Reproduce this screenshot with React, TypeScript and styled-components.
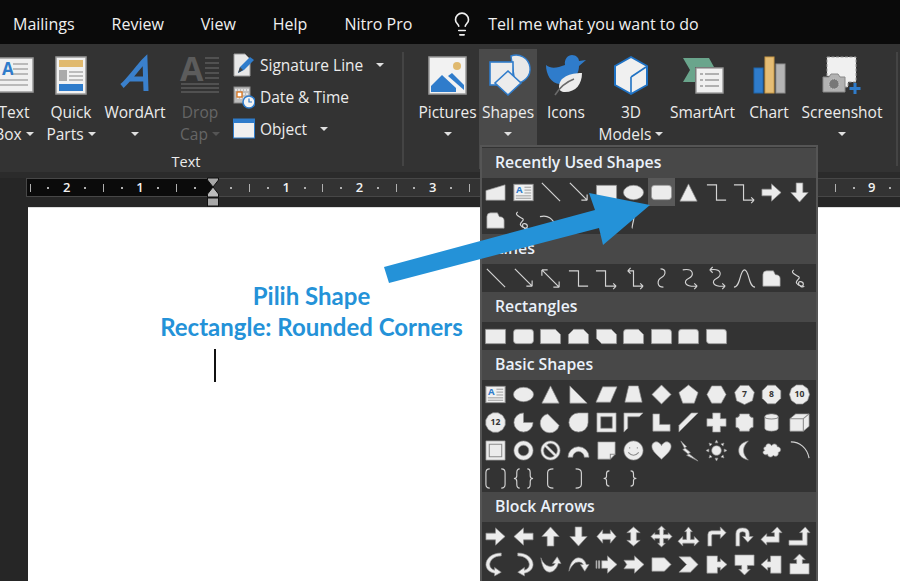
import React from 'react'
import styled, { createGlobalStyle } from 'styled-components'
import { Lightbulb } from 'lucide-react'

const GlobalStyle = createGlobalStyle`
  html, body { margin: 0; padding: 0; background: #262626; }
  body { width: 900px; height: 581px; overflow: hidden; font-family: "Open Sans", "Noto Sans", sans-serif; }
`

/* ---------- shape gallery data ---------- */

type Glyph = { d?: string; line?: boolean; detail?: string; label?: string; textbox?: boolean }

const poly = (n: number, r = 10.5) => {
  let d = ''
  for (let i = 0; i < n; i++) {
    const a = (Math.PI * 2 * (i + 0.5)) / n - Math.PI / 2
    d += (i ? 'L' : 'M') + (12 + r * Math.cos(a)).toFixed(2) + ' ' + (12 + r * Math.sin(a)).toFixed(2)
  }
  return d + 'Z'
}

const l = (d: string): Glyph => ({ d, line: true })
const f = (d: string, detail?: string): Glyph => ({ d, detail })
const n = (sides: number, label: string): Glyph => ({ d: poly(sides), label })

const TEXTBOX: Glyph = { textbox: true }
const LINE = l('M3 2L22 21')
const ARROW = l('M3 2L21 20M21 20h-6M21 20v-6')
const DOUBLE = l('M3 3L21 21M3 3h6M3 3v6M21 21h-6M21 21v-6')
const ELBOW = l('M2 4H12V20H22')
const ELBOW_A = l('M1 4H11V20H22M22 20l-3-3M22 20l-3 3')
const ELBOW_AA = l('M6 4H12V20H22M6 4l3-3M6 4l3 3M22 20l-3-3M22 20l-3 3')
const CURVED = l('M11 2C17 2 17 8 12 11C7 14 7 21 14 21')
const CURVED_A = l('M6 3C18 1 18 9 12 12C6 15 8 21 21 20M21 20l-3-3M21 20l-3 3')
const CURVED_AA = l('M5 3C18 1 18 9 12 12C6 15 8 21 21 20M5 3l3-3M5 3l3 3M21 20l-3-3M21 20l-3 3')
const BELL = l('M1 21C8 21 7 3 12 3S16 21 23 21')
const FREEFORM = f('M3 8Q3 4 7 4H14L16 8Q21 8 21 12V20H3Z')
const SCRIBBLE = l('M6 3C2 6 8 8 11 10S7 14 9 17s7 4 7 1-5-4-5-1 4 5 6 3')
const ARC = l('M3 3C12 3 20 9 22 20')
const RECT = f('M1.5 4.5H22.5V19.5H1.5Z')
const ROUND = f('M5 4.5H19Q22.5 4.5 22.5 8V16Q22.5 19.5 19 19.5H5Q1.5 19.5 1.5 16V8Q1.5 4.5 5 4.5Z')
const OVAL = f('M1.5 12a10.5 7.5 0 1 0 21 0a10.5 7.5 0 1 0-21 0Z')
const TRI = f('M12 3L21 21H3Z')
const RIGHT = f('M2 8.5H12V3L22 12L12 21V15.5H2Z')
const LEFT = f('M22 8.5H12V3L2 12L12 21V15.5H22Z')
const UP = f('M8.5 22V12H3L12 2L21 12H15.5V22Z')
const DOWN = f('M8.5 2V12H3L12 22L21 12H15.5V2Z')

const SECTIONS: { title: string; active?: number; glyphs: Glyph[] }[] = [
  {
    title: 'Recently Used Shapes',
    active: 6,
    glyphs: [
      f('M2 10L22 4V20H2Z'), TEXTBOX, LINE, ARROW, RECT, OVAL, ROUND, TRI, ELBOW, ELBOW_A, RIGHT, DOWN,
      FREEFORM, SCRIBBLE, l('M1 8C9 6 14 9 19 20'), l('M3 20C4 6 14 4 22 12'), {}, l('M9 4Q14 4 12 12T11 20'),
    ],
  },
  {
    title: 'Lines',
    glyphs: [LINE, ARROW, DOUBLE, ELBOW, ELBOW_A, ELBOW_AA, CURVED, CURVED_A, CURVED_AA, BELL, FREEFORM, SCRIBBLE],
  },
  {
    title: 'Rectangles',
    glyphs: [
      RECT, ROUND,
      f('M1.5 4.5H17L22.5 10V19.5H1.5Z'),
      f('M7 4.5H17L22.5 10V19.5H1.5V10Z'),
      f('M1.5 4.5H17L22.5 10V19.5H7L1.5 14Z'),
      f('M5 4.5H17L22.5 10V19.5H1.5V8Q1.5 4.5 5 4.5Z'),
      f('M1.5 4.5H19Q22.5 4.5 22.5 8V19.5H1.5Z'),
      f('M5 4.5H19Q22.5 4.5 22.5 8V19.5H1.5V8Q1.5 4.5 5 4.5Z'),
      f('M1.5 4.5H19Q22.5 4.5 22.5 8V19.5H5Q1.5 19.5 1.5 16Z'),
    ],
  },
  {
    title: 'Basic Shapes',
    glyphs: [
      TEXTBOX, OVAL, TRI, f('M3 3L21 21H3Z'), f('M8 4H23L16 20H1Z'), f('M7 3H17L21 20H3Z'),
      f('M12 2L22 12L12 22L2 12Z'), f('M12 2L22 10L18 21H6L2 10Z'), f('M7 3H17L22 12L17 21H7L2 12Z'),
      n(7, '7'), n(8, '8'), n(10, '10'),

      n(12, '12'), f('M12 12V2A10 10 0 1 0 22 12Z'), f('M9 3A10 10 0 1 0 21 15Z'), f('M22 2V12A10 10 0 1 1 12 2Z'),
      f('M2 2H22V22H2ZM6 6V18H18V6Z'), f('M2 2H22L18 6H6V18L2 22Z'), f('M3 3H10V14H21V21H3Z'), f('M15 2H22L2 22V15Z'),
      f('M8 2H16V8H22V16H16V22H8V16H2V8H8Z'), f('M7 3H17Q17 7 21 7V17Q17 17 17 21H7Q7 17 3 17V7Q7 7 7 3Z'),
      f('M5 6C5 2 19 2 19 6V18C19 22 5 22 5 18Z', 'M5 6C5 9 19 9 19 6'),
      f('M2 8L8 3H22V16L16 21H2Z', 'M2 8H16V21M16 8L22 3'),

      f('M2 2H22V22H2Z', 'M5.5 5.5H18.5V18.5H5.5Z'),
      f('M12 2a10 10 0 1 0 .01 0ZM12 6.5a5.5 5.5 0 1 1-.01 0Z'),
      f('M12 2a10 10 0 1 0 .01 0ZM8 6.2A7 7 0 0 1 17.8 16ZM6.2 8A7 7 0 0 0 16 17.8Z'),
      f('M1 19A11 11 0 0 1 23 19H18A6 6 0 0 0 6 19Z'),
      f('M3 3H21V16L16 21H3Z', 'M21 16H16V21'),
      f('M12 2a10 10 0 1 0 .01 0Z', 'M8 8.5v1.5M16 8.5v1.5M6.5 14Q12 20 17.5 14'),
      f('M12 21C4 14 2 11 2 7.5C2 4 6 2 8.5 3.5C10 4.3 11.5 5.5 12 7C12.5 5.5 14 4.3 15.5 3.5C18 2 22 4 22 7.5C22 11 20 14 12 21Z'),
      f('M4 2L10 8L8 9L14 14L12 15L22 23L10 17L12 16L6 11L8 10Z'),
      f('M12 7a5 5 0 1 0 .01 0ZM12 1l1.5 3h-3ZM12 23l-1.5-3h3ZM1 12l3-1.5v3ZM23 12l-3 1.5v-3ZM4.2 4.2l3.2 1-2.2 2.2ZM19.8 4.2l-1 3.2-2.2-2.2ZM4.2 19.8l1-3.2 2.2 2.2ZM19.8 19.8l-3.2-1 2.2-2.2Z'),
      f('M16 2C8 4 6 8 6 12S8 20 16 22C12 18 11 15 11 12S12 6 16 2Z'),
      f('M6 8C6 4 11 4 12 7C14 4 18 5 18 8C22 8 23 13 19 14C20 18 15 19 14 17C12 20 8 19 8 16C4 18 1 13 5 12C3 10 4 8 6 8Z'),
      ARC,

      l('M6 2Q2 2 2 6V18Q2 22 6 22M18 2Q22 2 22 6V18Q22 22 18 22'),
      l('M8 2Q5 2 5 6V9Q5 12 2 12Q5 12 5 15V18Q5 22 8 22M16 2Q19 2 19 6V9Q19 12 22 12Q19 12 19 15V18Q19 22 16 22'),
      l('M15 2Q9 2 9 6V18Q9 22 15 22'),
      l('M9 2Q15 2 15 6V18Q15 22 9 22'),
      l('M15 4Q12 4 12 7V10Q12 12 9 12Q12 12 12 14V17Q12 20 15 20'),
      l('M9 4Q12 4 12 7V10Q12 12 15 12Q12 12 12 14V17Q12 20 9 20'),
    ],
  },
  {
    title: 'Block Arrows',
    glyphs: [
      RIGHT, LEFT, UP, DOWN,
      f('M2 12L8 5V9H16V5L22 12L16 19V15H8V19Z'),
      f('M12 2L19 8H15V16H19L12 22L5 16H9V8H5Z'),
      f('M12 1L16 5H14V10H19V8L23 12L19 16V14H14V19H16L12 23L8 19H10V14H5V16L1 12L5 8V10H10V5H8Z'),
      f('M12 2L16 7H14V15H18V12L23 17L18 22V19H6V22L1 17L6 12V15H10V7H8Z'),
      f('M3 22V10Q3 6 7 6H16V2L22 8L16 14V10H8Q7 10 7 11V22Z'),
      f('M3 22V9Q3 3 10 3T17 9V12H21L15.5 18L10 12H13V9Q13 7 10 7T7 9V22Z'),
      f('M18 2L23 8H20V18H7V21L1 15L7 9V12H15V8H12Z'),
      f('M1 16H15V8H12L18 2L23 8H20V21H1Z'),

      f('M18 3C10 3 6 8 6 12C6 15 8 17 11 18V15L18 20L11 24V21C5 20 2 16 2 12C2 6 8 0 18 0Z'),
      f('M6 3C14 3 18 8 18 12C18 15 16 17 13 18V15L6 20L13 24V21C19 20 22 16 22 12C22 6 16 0 6 0Z'),
      f('M2 5C4 11 8 14 12 14C14 14 16 13 17 11H14L19 4L23 11H20C19 16 15 20 11 20C6 20 3 14 2 5Z'),
      f('M2 19C3 11 7 5 12 5C16 5 19 8 20 12H23L18.5 19L14 12H17C16 10 14 9.5 12 9.5C8 9.5 5 13 2 19Z'),
      f('M1 8H2V16H1ZM3.5 8H5V16H3.5ZM7 8H13V3L23 12L13 21V16H7Z'),
      f('M2 7.5H13V3L23 12L13 21V16.5H2L5 12Z'),
      f('M2 5H15L22 12L15 19H2Z'),
      f('M2 4H14L22 12L14 20H2L10 12Z'),
      f('M2 3H13V9H16V6L23 12L16 18V15H13V21H2Z'),
      f('M2 2H22V13H15V17H18L12 23L6 17H9V13H2Z'),
      f('M11 3H22V21H11V15H8V18L1 12L8 6V9H11Z'),
      f('M2 22V11H9V7H6L12 1L18 7H15V11H22V22Z'),
    ],
  },
]

/* ---------- page ---------- */

export default function App() {
  return (
    <>
      <GlobalStyle />
      <Window>
        <TitleBar>
          <Tab>Mailings</Tab>
          <Tab>Review</Tab>
          <Tab>View</Tab>
          <Tab>Help</Tab>
          <Tab>Nitro Pro</Tab>
          <TellMe>
            <Lightbulb size={26} strokeWidth={1.5} />
            <span>Tell me what you want to do</span>
          </TellMe>
        </TitleBar>

        <Ribbon>
          <Group $width={432} $offset={-30}>
            <GroupItems>
              <RibbonButton $width={56} $first>
                <IconSlot><TextBoxIcon /></IconSlot>
                <BtnLine>Text</BtnLine>
                <BtnLine>Box<Caret $inline /></BtnLine>
              </RibbonButton>
              <RibbonButton $width={58}>
                <IconSlot><QuickPartsIcon /></IconSlot>
                <BtnLine>Quick</BtnLine>
                <BtnLine>Parts<Caret $inline /></BtnLine>
              </RibbonButton>
              <RibbonButton $width={70}>
                <IconSlot><WordArtIcon /></IconSlot>
                <BtnLine>WordArt</BtnLine>
                <BtnLine><Caret /></BtnLine>
              </RibbonButton>
              <RibbonButton $width={60} $disabled>
                <IconSlot><DropCapIcon /></IconSlot>
                <BtnLine>Drop</BtnLine>
                <BtnLine>Cap<Caret $inline $disabled /></BtnLine>
              </RibbonButton>
              <SmallStack>
                <SmallRow><SignatureIcon /><span>Signature Line</span><Caret $gap={8} /></SmallRow>
                <SmallRow><DateTimeIcon /><span>Date &amp; Time</span></SmallRow>
                <SmallRow><ObjectIcon /><span>Object</span><Caret $gap={8} /></SmallRow>
              </SmallStack>
            </GroupItems>
            <GroupLabel>Text</GroupLabel>
          </Group>
          <GroupSep />
          <Group $width={492} $offset={0}>
            <GroupItems>
              <RibbonButton $width={63} $pad={12}>
                <IconSlot><PicturesIcon /></IconSlot>
                <BtnLine>Pictures</BtnLine>
                <BtnLine><Caret /></BtnLine>
              </RibbonButton>
              <RibbonButton $width={58} $active>
                <IconSlot><ShapesIcon /></IconSlot>
                <BtnLine>Shapes</BtnLine>
                <BtnLine><Caret /></BtnLine>
              </RibbonButton>
              <RibbonButton $width={58}>
                <IconSlot><IconsIcon /></IconSlot>
                <BtnLine>Icons</BtnLine>
              </RibbonButton>
              <RibbonButton $width={72}>
                <IconSlot><CubeIcon /></IconSlot>
                <BtnLine>3D</BtnLine>
                <BtnLine>Models<Caret $inline /></BtnLine>
              </RibbonButton>
              <RibbonButton $width={71}>
                <IconSlot><SmartArtIcon /></IconSlot>
                <BtnLine>SmartArt</BtnLine>
              </RibbonButton>
              <RibbonButton $width={62}>
                <IconSlot><ChartIcon /></IconSlot>
                <BtnLine>Chart</BtnLine>
              </RibbonButton>
              <RibbonButton $width={84}>
                <IconSlot><ScreenshotIcon /></IconSlot>
                <BtnLine>Screenshot</BtnLine>
                <BtnLine><Caret /></BtnLine>
              </RibbonButton>
            </GroupItems>
          </Group>
          <GroupSep />
        </Ribbon>

        <RulerBand>
          <Ruler>
            {Array.from({ length: 49 }, (_, i) => {
              const k = i - 10
              const mod = ((k % 4) + 4) % 4
              return (
                <RulerCell key={i}>
                  {mod === 0 && k !== 0 ? <RulerNum>{Math.abs(k / 4)}</RulerNum> : null}
                  {mod === 1 || mod === 3 ? <RulerDot /> : null}
                  {mod === 2 ? <RulerTick /> : null}
                </RulerCell>
              )
            })}
            <IndentMarker viewBox="0 0 12 30">
              <path d="M0.5 1H11.5V3L6 10L0.5 3Z" fill="#a8a8a8" stroke="#111" />
              <path d="M6 10L11.5 17V20H0.5V17Z" fill="#bdbdbd" stroke="#111" />
              <rect x="0.5" y="21" width="11" height="8" fill="#a8a8a8" stroke="#111" />
            </IndentMarker>
          </Ruler>
        </RulerBand>

        <DocArea>
          <Page>
            <Annotation>
              Pilih Shape
              <br />
              Rectangle: Rounded Corners
            </Annotation>
            <TextCursor />
          </Page>
        </DocArea>

        <Gallery>
          {SECTIONS.map(s => (
            <section key={s.title}>
              <SectionHead>{s.title}</SectionHead>
              <ShapeGrid>
                {s.glyphs.map((g, i) => (
                  <ShapeCell key={i} $active={s.active === i}>
                    <ShapeIcon glyph={g} />
                  </ShapeCell>
                ))}
              </ShapeGrid>
            </section>
          ))}
        </Gallery>

        <CalloutArrow viewBox="0 0 280 100">
          <path d="M4 77L215 20L209 3L270 15L223 55L219 38L9 93Z" fill="#2492d8" />
        </CalloutArrow>
      </Window>
    </>
  )
}

function ShapeIcon({ glyph }: { glyph: Glyph }) {
  if (glyph.textbox) {
    return (
      <ShapeSvg viewBox="0 0 24 24">
        <rect x="2" y="3.5" width="20" height="17" fill="#f0f0f0" stroke="#999" />
        <GlyphLetter x="7.5" y="12.5">A</GlyphLetter>
        <path d="M13 6.5h7M13 9.5h7M13 12.5h7M4 15.5h16M4 18h16" stroke="#999" strokeWidth="1" />
      </ShapeSvg>
    )
  }
  if (!glyph.d) return null
  return (
    <ShapeSvg viewBox="0 0 24 24">
      {glyph.line ? <LinePath d={glyph.d} /> : <FillPath d={glyph.d} fillRule="evenodd" />}
      {glyph.detail ? <DetailPath d={glyph.detail} /> : null}
      {glyph.label ? <GlyphNumber x="12" y="15">{glyph.label}</GlyphNumber> : null}
    </ShapeSvg>
  )
}

/* ---------- ribbon icons ---------- */

function TextBoxIcon() {
  return (
    <RibbonSvg $w={40} $h={36} $shift={-1} viewBox="0 0 40 36">
      <rect x="1" y="1" width="38" height="34" fill="#f0f0f0" stroke="#9a9a9a" strokeWidth="1.5" />
      <BlueLetter x="8" y="18">A</BlueLetter>
      <path d="M19 7h15M19 12h15M19 17h15M5 23h29M5 28h29" stroke="#a8a8a8" strokeWidth="1.6" />
    </RibbonSvg>
  )
}

function QuickPartsIcon() {
  return (
    <RibbonSvg $w={32} $h={39} viewBox="0 0 32 39">
      <rect x="1" y="1" width="30" height="37" fill="#f2f2f2" stroke="#9a9a9a" strokeWidth="1.5" />
      <rect x="4" y="4" width="24" height="7" fill="#e0b96e" />
      <rect x="4" y="14" width="8" height="11" fill="#aaa" />
      <path d="M14 16h14M14 20h14M14 24h14" stroke="#aaa" strokeWidth="1.4" />
      <rect x="4" y="28" width="24" height="7" fill="#2f7ccb" />
    </RibbonSvg>
  )
}

function WordArtIcon() {
  return (
    <RibbonSvg $w={30} $h={37} viewBox="0 0 30 37">
      <path d="M2 29C10 22 18 10 25 3L26 34M8 22H25" fill="none" stroke="#3a80cc" strokeWidth="5" />
    </RibbonSvg>
  )
}

function DropCapIcon() {
  return (
    <RibbonSvg $w={40} $h={41} viewBox="0 0 40 41">
      <GreyLetter x="0" y="26">A</GreyLetter>
      <path d="M25 3h14M25 8h14M25 13h14M25 18h14M25 23h14M1 29h38M1 33h38M1 37h38" stroke="#5c5c5c" strokeWidth="1.6" />
    </RibbonSvg>
  )
}

function SignatureIcon() {
  return (
    <SmallSvg viewBox="0 0 22 24">
      <path d="M1 1H12L17 6V23H1Z" fill="#e8e8e8" stroke="#999" />
      <path d="M5 20L7 14L17 4L21 7L11 17Z" fill="#2f7ccb" />
      <path d="M5 20L7 14L10 17Z" fill="#444" />
    </SmallSvg>
  )
}

function DateTimeIcon() {
  return (
    <SmallSvg viewBox="0 0 22 24">
      <rect x="1" y="2" width="16" height="16" fill="#bdbdbd" stroke="#888" />
      <path d="M2 5h14M4 9h3M10 9h5M4 13h12" stroke="#eee" strokeWidth="1.5" strokeDasharray="2 1" />
      <rect x="4" y="7" width="5" height="5" fill="#fff" stroke="#d9731b" strokeWidth="1.3" />
      <circle cx="16" cy="17" r="6" fill="#f4f4f4" stroke="#2f7ccb" strokeWidth="1.6" />
      <path d="M16 13.5V17H19" stroke="#2f7ccb" strokeWidth="1.2" fill="none" />
    </SmallSvg>
  )
}

function ObjectIcon() {
  return (
    <SmallSvg viewBox="0 0 22 24">
      <rect x="0.5" y="2" width="21" height="19" fill="#f0f0f0" stroke="#2f7ccb" />
      <rect x="0.5" y="2" width="21" height="4" fill="#2f7ccb" />
    </SmallSvg>
  )
}

function PicturesIcon() {
  return (
    <RibbonSvg $w={39} $h={39} viewBox="0 0 39 39">
      <rect x="1" y="1" width="37" height="37" fill="#f2f2f2" stroke="#9a9a9a" strokeWidth="1.5" />
      <circle cx="29" cy="10" r="4" fill="#e0b96e" />
      <path d="M3 36V30L14 19L28 32V36Z" fill="#2f7ccb" />
      <path d="M20 20L24 17L36 29V34Z" fill="#2f7ccb" />
    </RibbonSvg>
  )
}

function ShapesIcon() {
  return (
    <RibbonSvg $w={42} $h={42} viewBox="0 0 42 42">
      <path d="M24 2A14 14 0 1 1 28 29Z" fill="#e8e8e8" stroke="#2f7ccb" strokeWidth="1.4" />
      <rect x="3" y="8" width="23" height="23" fill="#ececec" stroke="#2f7ccb" strokeWidth="1.6" />
      <path d="M21 17L34 29L21 41L8 29Z" fill="#ececec" stroke="#2f7ccb" strokeWidth="1.6" />
    </RibbonSvg>
  )
}

function IconsIcon() {
  return (
    <RibbonSvg $w={42} $h={42} viewBox="0 0 42 42">
      <path d="M1 11C6 15 12 14 20 11C19 5 23 1 27 1C31 1 34 4 34 7L41 6L34 12C34 20 28 30 15 30C6 30 1 20 1 11Z" fill="#2f7ccb" />
      <path d="M37 19C25 19 14 23 14 33C14 36 16 38 20 38C31 38 37 30 37 19Z" fill="#ececec" />
      <path d="M10 41C15 33 21 28 29 25" fill="none" stroke="#6a6a6a" strokeWidth="1.6" />
    </RibbonSvg>
  )
}

function CubeIcon() {
  return (
    <RibbonSvg $w={36} $h={41} viewBox="0 0 36 41">
      <path d="M18 2L34 11V30L18 39L2 30V11Z" fill="#f0f0f0" stroke="#1f72c4" strokeWidth="2" strokeLinejoin="round" />
      <path d="M18 22V39M18 22L33 12" fill="none" stroke="#1f72c4" strokeWidth="1.6" />
    </RibbonSvg>
  )
}

function SmartArtIcon() {
  return (
    <RibbonSvg $w={42} $h={37} viewBox="0 0 42 37">
      <path d="M1 1H27L32 10H13V25H1L8 13Z" fill="#6aa58c" />
      <rect x="14" y="11" width="27" height="25" fill="#f0f0f0" stroke="#9a9a9a" strokeWidth="1.4" />
      <path d="M18 17h3M23 17h14M18 23h3M23 23h14M18 29h3M23 29h14" stroke="#9a9a9a" strokeWidth="1.5" />
    </RibbonSvg>
  )
}

function ChartIcon() {
  return (
    <RibbonSvg $w={33} $h={38} viewBox="0 0 33 38">
      <rect x="1" y="12" width="9" height="25" fill="#2f7ccb" stroke="#1f66ad" />
      <rect x="12" y="1" width="9" height="36" fill="#e5bd75" stroke="#c99a48" />
      <rect x="23" y="8" width="9" height="29" fill="#b4b4b4" stroke="#8f8f8f" />
    </RibbonSvg>
  )
}

function ScreenshotIcon() {
  return (
    <RibbonSvg $w={41} $h={39} viewBox="0 0 41 39">
      <path d="M5 1H34V26H26V31H12V20H5Z" fill="#f0f0f0" stroke="#999" strokeDasharray="3 1.5" />
      <path d="M1 21H7L9 18H16L18 21H23V36H1Z" fill="#b2b2b2" stroke="#888" />
      <circle cx="12" cy="28" r="5" fill="#777" stroke="#ccc" strokeDasharray="1.4 1" />
      <path d="M33 27V38M27.5 32.5H38.5" stroke="#2f7ccb" strokeWidth="3" />
    </RibbonSvg>
  )
}

/* ---------- styles ---------- */

const Window = styled.div`
  position: relative;
  width: 900px;
  height: 581px;
  overflow: hidden;
  display: flex;
  flex-direction: column;
  background: #262626;
`

const TitleBar = styled.header`
  height: 44px;
  flex: none;
  box-sizing: border-box;
  display: flex;
  align-items: center;
  padding: 3px 0 0 13px;
  gap: 37px;
  background: #0a0a0a;
  color: #f0f0f0;
  font-size: 16px;
`

const Tab = styled.span`
  white-space: nowrap;
`

const TellMe = styled.div`
  display: flex;
  align-items: center;
  gap: 13px;
  svg {
    flex: none;
  }
  span {
    white-space: nowrap;
  }
`

const Ribbon = styled.div`
  height: 128px;
  flex: none;
  display: flex;
  background: #333;
  color: #ececec;
  font-size: 15.5px;
  overflow: hidden;
`

const Group = styled.div<{ $width: number; $offset: number }>`
  flex: none;
  width: ${p => p.$width}px;
  margin-left: ${p => p.$offset}px;
  display: flex;
  flex-direction: column;
  padding-top: 5px;
`

const GroupItems = styled.div`
  display: flex;
  height: 101px;
`

const GroupLabel = styled.div`
  text-align: center;
  line-height: 20px;
  margin-top: 6px;
  font-size: 14.5px;
`

const GroupSep = styled.div`
  flex: none;
  width: 2px;
  margin: 8px 0 6px;
  background: #444;
`

const RibbonButton = styled.div<{ $width: number; $first?: boolean; $disabled?: boolean; $active?: boolean; $pad?: number }>`
  flex: none;
  width: ${p => p.$width}px;
  margin-left: ${p => (p.$first ? 16 : p.$pad ?? 0)}px;
  display: flex;
  flex-direction: column;
  align-items: center;
  color: ${p => (p.$disabled ? '#666' : 'inherit')};
  background: ${p => (p.$active ? '#4a4a4a' : 'transparent')};
  height: ${p => (p.$active ? '120px' : 'auto')};
`

const IconSlot = styled.div`
  height: 52px;
  display: flex;
  align-items: center;
  justify-content: center;
`

const BtnLine = styled.div`
  height: 22px;
  line-height: 22px;
  white-space: nowrap;
  display: flex;
  align-items: center;
  justify-content: center;
`

const Caret = styled.i<{ $inline?: boolean; $gap?: number; $disabled?: boolean }>`
  display: inline-block;
  width: 0;
  height: 0;
  margin-left: ${p => (p.$gap ? `${p.$gap}px` : p.$inline ? '4px' : '0')};
  border-style: solid;
  border-width: 4px 4px 0;
  border-color: ${p => (p.$disabled ? '#555' : '#e0e0e0')} transparent transparent;
`

const SmallStack = styled.div`
  margin-left: 3px;
  display: flex;
  flex-direction: column;
`

const SmallRow = styled.div`
  height: 32px;
  display: flex;
  align-items: center;
  gap: 5px;
  white-space: nowrap;
`

const SmallSvg = styled.svg`
  width: 22px;
  height: 24px;
  flex: none;
`

const RibbonSvg = styled.svg<{ $w: number; $h: number; $shift?: number }>`
  width: ${p => p.$w}px;
  height: ${p => p.$h}px;
  margin-left: ${p => p.$shift ?? 0}px;
  flex: none;
  overflow: visible;
`

const BlueLetter = styled.text`
  font: 700 17px "Open Sans", sans-serif;
  fill: #2f7ccb;
`

const GreyLetter = styled.text`
  font: 700 34px "Open Sans", sans-serif;
  fill: #5c5c5c;
`

const RulerBand = styled.div`
  height: 35px;
  flex: none;
  padding: 6px 0 0 26px;
  box-sizing: border-box;
  background: linear-gradient(#2b2b2b 6px, #262626 6px);
`

const Ruler = styled.div`
  position: relative;
  height: 19px;
  box-sizing: border-box;
  border: 1px solid #474747;
  border-right: 0;
  display: flex;
  background: linear-gradient(90deg, #0b0b0b 186px, #333 186px);
`

const RulerCell = styled.div`
  flex: none;
  width: 18.3px;
  display: flex;
  align-items: center;
  justify-content: center;
  &:first-child {
    margin-left: -6px;
  }
`

const RulerNum = styled.span`
  color: #f2f2f2;
  font-size: 13px;
  font-weight: 600;
  line-height: 1;
`

const RulerDot = styled.i`
  width: 2px;
  height: 2px;
  background: #b0b0b0;
`

const RulerTick = styled.i`
  width: 1px;
  height: 8px;
  background: #b0b0b0;
`

const IndentMarker = styled.svg`
  position: absolute;
  left: 180px;
  top: -2px;
  width: 12px;
  height: 30px;
`

const DocArea = styled.div`
  flex: 1;
  padding-left: 28px;
  display: flex;
`

const Page = styled.main`
  flex: 1;
  background: #fff;
  border-top: 1px solid #ddd;
  padding: 72px 0 0 132px;
`

const Annotation = styled.div`
  width: 303px;
  color: #2492d8;
  font: 700 24px/31px Lato, "Open Sans", sans-serif;
  text-align: center;
  white-space: nowrap;
`

const TextCursor = styled.div`
  width: 1.5px;
  height: 33px;
  margin: 7px 0 0 54px;
  background: #111;
`

const Gallery = styled.aside`
  position: absolute;
  left: 480px;
  top: 145px;
  width: 338px;
  height: 436px;
  box-sizing: border-box;
  padding-top: 1px;
  border: 2px solid #555;
  border-bottom: 0;
  background: #333;
`

const SectionHead = styled.h3`
  margin: 0;
  height: 30px;
  padding-left: 13px;
  background: #484848;
  color: #eaf1fa;
  font-size: 15.8px;
  font-weight: 600;
  line-height: 28px;
`

const ShapeGrid = styled.div`
  display: grid;
  grid-template-columns: repeat(12, 27.6px);
  grid-auto-rows: 28px;
`

const ShapeCell = styled.div<{ $active?: boolean }>`
  display: flex;
  align-items: center;
  justify-content: center;
  background: ${p => (p.$active ? '#595959' : 'transparent')};
`

const ShapeSvg = styled.svg`
  width: 23px;
  height: 23px;
  overflow: visible;
`

const FillPath = styled.path`
  fill: #ececec;
  stroke: #8f8f8f;
  stroke-width: 0.7;
`

const LinePath = styled.path`
  fill: none;
  stroke: #d4d4d4;
  stroke-width: 1.2;
`

const DetailPath = styled.path`
  fill: none;
  stroke: #8a8a8a;
  stroke-width: 1.1;
`

const GlyphLetter = styled.text`
  font: 700 10px "Open Sans", sans-serif;
  fill: #2f7ccb;
  text-anchor: middle;
`

const GlyphNumber = styled.text`
  font: 700 9px "Open Sans", sans-serif;
  fill: #333;
  text-anchor: middle;
`

const CalloutArrow = styled.svg`
  position: absolute;
  left: 380px;
  top: 190px;
  width: 280px;
  height: 100px;
`
